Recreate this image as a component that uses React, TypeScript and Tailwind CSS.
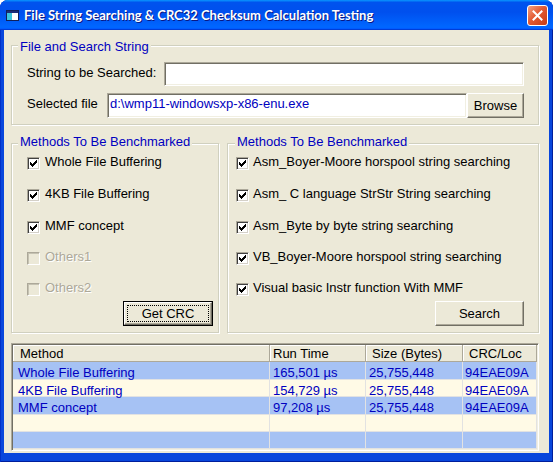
import type { ReactNode } from "react";

type Row = { cells: string[]; h: string; bg: string };

const results: Row[] = [
  { cells: ["Whole File Buffering", "165,501 µs", "25,755,448", "94EAE09A"], h: "h-[18px]", bg: "bg-[#a6c2f4]" },
  { cells: ["4KB File Buffering", "154,729 µs", "25,755,448", "94EAE09A"], h: "h-[17px]", bg: "bg-[#fffae6]" },
  { cells: ["MMF concept", "97,208 µs", "25,755,448", "94EAE09A"], h: "h-[18px]", bg: "bg-[#a6c2f4]" },
  { cells: ["", "", "", ""], h: "h-[17px]", bg: "bg-[#fffae6]" },
  { cells: ["", "", "", ""], h: "h-[17px]", bg: "bg-[#a6c2f4]" },
];

// column widths + text offsets (header / data differ, like the flexgrid does)
const cols = [
  { w: "w-[257px]", hp: "pl-[7px]", dp: "pl-[5px]", title: "Method" },
  { w: "w-[96px]", hp: "pl-[3px]", dp: "pl-[3px]", title: "Run Time" },
  { w: "w-[97px]", hp: "pl-[6px]", dp: "pl-[3px]", title: "Size (Bytes)" },
  { w: "w-[74px]", hp: "pl-[6px]", dp: "pl-[2px]", title: "CRC/Loc" },
];

const leftMethods = [
  { label: "Whole File Buffering", on: true, mt: "mt-0" },
  { label: "4KB File Buffering", on: true, mt: "mt-[19px]" },
  { label: "MMF concept", on: true, mt: "mt-[19px]" },
  { label: "Others1", on: false, disabled: true, mt: "mt-[18px]" },
  { label: "Others2", on: false, disabled: true, mt: "mt-[18px]" },
];

const rightMethods = [
  { label: "Asm_Boyer-Moore horspool string searching", mt: "mt-0" },
  { label: "Asm_ C language StrStr String searching", mt: "mt-[19px]" },
  { label: "Asm_Byte by byte string searching", mt: "mt-[19px]" },
  { label: "VB_Boyer-Moore horspool string searching", mt: "mt-[18px]" },
  { label: "Visual basic Instr function With MMF", mt: "mt-[18px]" },
];

export default function App() {
  return (
    <div className="h-[462px] w-[553px] overflow-hidden bg-white font-['Liberation_Sans',Arial,sans-serif] text-[13px] leading-[15px] text-black">
      <div className="flex h-full flex-col overflow-hidden rounded-t-[8px] bg-[#0846dc] shadow-[inset_1px_0_0_#0030c8,inset_-1px_-1px_0_#001e9c]">
        {/* Title bar */}
        <div className="flex h-[30px] shrink-0 items-center bg-[linear-gradient(180deg,#0997ff,#0053ee_8%,#0050ee_40%,#06f_88%,#06f_93%,#005bff_95%,#003dd7_96%,#003dd7)] pl-[6px] pr-[5px]">
          <svg width="13" height="11" viewBox="0 0 13 11" className="mt-[1px] shrink-0">
            <rect x="0.5" y="0.5" width="12" height="10" fill="#ffffff" stroke="#10205a" />
            <rect x="1" y="1" width="11" height="2" fill="#1c2c78" />
            <rect x="1" y="3" width="5" height="7" fill="#3cc4dc" />
          </svg>
          <span className="ml-[5px] font-['Lato',sans-serif] text-[13px] font-bold text-white [text-shadow:1px_1px_0_#0a1883]">
            File String Searching &amp; CRC32 Checksum Calculation Testing
          </span>
          <div className="ml-auto flex h-[21px] w-[21px] items-center justify-center rounded-[3px] border border-white bg-[linear-gradient(135deg,#f3a283,#e35a33_45%,#c83b12)]">
            <svg width="11" height="11" viewBox="0 0 11 11">
              <path d="M1.5 1.5 L9.5 9.5 M9.5 1.5 L1.5 9.5" stroke="#fff" strokeWidth="2" strokeLinecap="square" />
            </svg>
          </div>
        </div>

        {/* Client area */}
        <div className="mx-[4px] mb-[9px] flex flex-1 flex-col bg-[#ece9d8] pl-[7px] pr-[10px] pt-[15px]">
          {/* File and Search String */}
          <div className="relative h-[80px] border border-[#d0d0bf] shadow-[inset_1px_1px_0_#fff,1px_1px_0_#fff]">
            <span className="absolute -top-[7px] left-[6px] bg-[#ece9d8] px-[2px] text-[#0000c0]">
              File and Search String
            </span>
            <div className="flex items-start justify-between pl-[15px] pr-[14px] pt-[16px]">
              <span className="mt-[3px]">String to be Searched:</span>
              <TextBox className="h-[24px] w-[360px]" />
            </div>
            <div className="mt-[7px] flex items-start justify-between pl-[15px] pr-[14px]">
              <span className="mt-[3px]">Selected file</span>
              <div className="flex">
                <TextBox className="h-[25px] w-[360px]">d:\wmp11-windowsxp-x86-enu.exe</TextBox>
                <XpButton className="h-[25px] w-[57px]">Browse</XpButton>
              </div>
            </div>
          </div>

          {/* Method groups */}
          <div className="mt-[18px] flex gap-[8px]">
            <div className="relative h-[190px] w-[208px] shrink-0 border border-[#d0d0bf] shadow-[inset_1px_1px_0_#fff,1px_1px_0_#fff]">
              <span className="absolute -top-[10px] left-[6px] bg-[#ece9d8] px-[2px] text-[#0000c0]">
                Methods To Be Benchmarked
              </span>
              <div className="flex flex-col pl-[15px] pt-[13px]">
                {leftMethods.map((m) => (
                  <CheckRow key={m.label} label={m.label} checked={m.on} disabled={m.disabled} className={m.mt} gap="ml-[5px]" />
                ))}
              </div>
              <div className="mt-[5px] flex justify-end pr-[5px]">
                <DefaultButton className="h-[25px] w-[90px]">Get CRC</DefaultButton>
              </div>
            </div>

            <div className="relative h-[190px] flex-1 border border-[#d0d0bf] shadow-[inset_1px_1px_0_#fff,1px_1px_0_#fff]">
              <span className="absolute -top-[10px] left-[7px] bg-[#ece9d8] px-[2px] text-[#0000c0]">
                Methods To Be Benchmarked
              </span>
              <div className="flex flex-col pl-[8px] pt-[13px]">
                {rightMethods.map((m) => (
                  <CheckRow key={m.label} label={m.label} checked className={m.mt} gap="ml-[4px]" />
                ))}
              </div>
              <div className="mt-[5px] flex justify-end pr-[14px]">
                <XpButton className="h-[25px] w-[89px]">Search</XpButton>
              </div>
            </div>
          </div>

          {/* Results grid */}
          <div className="mt-[10px] h-[108px] overflow-hidden border border-[#aca899] border-b-white border-r-white bg-[#fffae6] shadow-[inset_1px_1px_0_#716f64,inset_-1px_-1px_0_#f1efe2] p-[1px]">
            <div className="flex h-[17px] border-b border-[#aca899] bg-[#ece9d8]">
              {cols.map((c) => (
                <div
                  key={c.title}
                  className={`${c.w} ${c.hp} shrink-0 border-r border-[#aca899] pt-[2px] leading-[14px] shadow-[inset_1px_1px_0_#fff]`}
                >
                  {c.title}
                </div>
              ))}
            </div>
            {results.map((r, i) => (
              <div key={i} className={`flex ${r.h} ${r.bg} border-b border-[#e2e2e2] text-[#0000c0]`}>
                {r.cells.map((cell, j) => (
                  <div
                    key={j}
                    className={`${cols[j].w} ${cols[j].dp} shrink-0 whitespace-nowrap border-r border-[#e2e2e2] pt-[4px] leading-[14px]`}
                  >
                    {cell}
                  </div>
                ))}
              </div>
            ))}
          </div>
        </div>
      </div>
    </div>
  );
}

function TextBox({ className, children }: { className: string; children?: ReactNode }) {
  return (
    <div
      className={`${className} border border-[#aca899] border-b-white border-r-white bg-white pl-[2px] pt-[2px] text-[#0000c0] shadow-[inset_1px_1px_0_#716f64,inset_-1px_-1px_0_#f1efe2]`}
    >
      {children}
    </div>
  );
}

function XpButton({ className, children }: { className: string; children: ReactNode }) {
  return (
    <button
      className={`${className} flex items-center justify-center border border-white border-b-[#716f64] border-r-[#716f64] bg-[#ece9d8] shadow-[inset_-1px_-1px_0_#aca899]`}
    >
      {children}
    </button>
  );
}

function DefaultButton({ className, children }: { className: string; children: ReactNode }) {
  return (
    <div className={`${className} border border-black`}>
      <div className="flex h-full w-full border border-white border-b-[#716f64] border-r-[#716f64] bg-[#ece9d8] p-[2px] shadow-[inset_-1px_-1px_0_#aca899]">
        <span className="flex flex-1 items-center justify-center border border-dotted border-black">{children}</span>
      </div>
    </div>
  );
}

function CheckRow({
  label,
  checked,
  disabled,
  className,
  gap,
}: {
  label: string;
  checked?: boolean;
  disabled?: boolean;
  className: string;
  gap: string;
}) {
  return (
    <div className={`flex h-[13px] items-start ${className}`}>
      <span
        className={`flex h-[13px] w-[13px] shrink-0 items-center justify-center border border-[#aca899] border-b-white border-r-white ${
          disabled ? "bg-[#ece9d8] shadow-[inset_1px_1px_0_#c5c2b2]" : "bg-white shadow-[inset_1px_1px_0_#404040,inset_-1px_-1px_0_#d4d0c8]"
        }`}
      >
        {checked && (
          <svg width="7" height="7" viewBox="0 0 7 7" shapeRendering="crispEdges">
            <path d="M6 0h1v1h-1zM5 1h2v1h-2zM0 2h1v1h-1zM4 2h3v1h-3zM0 3h2v1h-2zM3 3h3v1h-3zM0 4h5v1h-5zM1 5h3v1h-3zM2 6h1v1h-1z" fill="#000" />
          </svg>
        )}
      </span>
      <span
        className={`${gap} -mt-[3px] whitespace-nowrap ${disabled ? "text-[#aca899] [text-shadow:1px_1px_0_#fff]" : ""}`}
      >
        {label}
      </span>
    </div>
  );
}
